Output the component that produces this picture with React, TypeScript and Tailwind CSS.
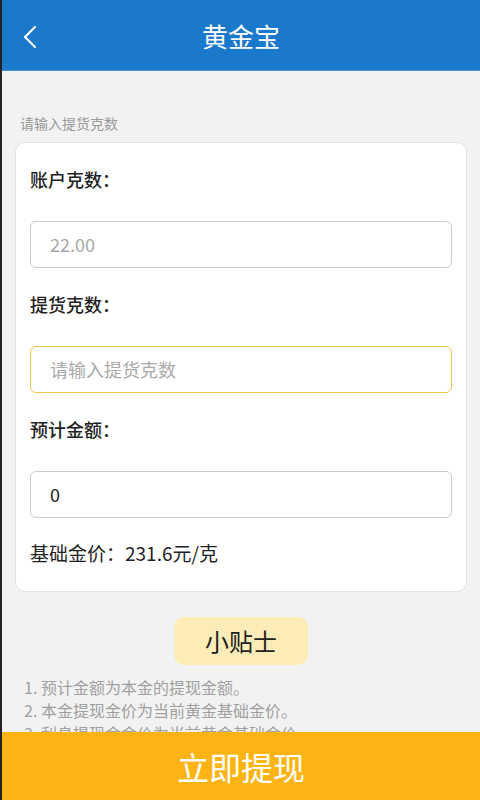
import { ChevronLeft } from "lucide-react";

const font = { fontFamily: '"Noto Sans CJK SC", "Liberation Sans", sans-serif' };

function Field({ label, value, placeholder, focus, dim }: { label: string; value?: string; placeholder?: string; focus?: boolean; dim?: boolean }) {
  return (
    <div>
      <div className="text-[18px] leading-[24px] text-[#222] font-medium pt-[24px]">{label}</div>
      <div
        className={`mt-[30px] h-[47px] rounded-[6px] border flex items-center px-[19px] text-[18px] ${
          focus ? "border-[#f0c850]" : "border-[#cccccc]"
        }`}
      >
        {value !== undefined ? (
          <span className={dim ? "text-[#a8a8a8]" : "text-[#222]"}>{value}</span>
        ) : (
          <span className="text-[#aaaaaa]">{placeholder}</span>
        )}
      </div>
    </div>
  );
}

export default function App() {
  return (
    <div className="relative h-[800px] w-[480px] overflow-hidden bg-[#f2f2f2] border-l-2 border-[#222]" style={font}>
      {/* header */}
      <div className="h-[71px] bg-[#1b79cb] flex items-center justify-center relative border-b border-[#4a95d6]">
        <ChevronLeft className="absolute left-[8px] top-[17px] text-white" size={40} strokeWidth={1.3} />
        <span className="text-white text-[26px]">黄金宝</span>
      </div>

      <div className="px-[13px]">
        <div className="pl-[5px] pt-[42px] text-[14px] leading-[20px] text-[#999]">请输入提货克数</div>

        <div className="mt-[9px] bg-white rounded-[10px] border border-[#e2e2e2] px-[14px] pb-[26px]">
          <Field label="账户克数：" value="22.00" dim />
          <Field label="提货克数：" placeholder="请输入提货克数" focus />
          <Field label="预计金额：" value="0" />
          <div className="pt-[23px] text-[19px] leading-[24px] text-[#222]">基础金价：231.6元/克</div>
        </div>

        <div className="flex justify-center mt-[25px]">
          <div className="w-[134px] h-[48px] rounded-[10px] bg-[#fcedb8] flex items-center justify-center text-[24px] text-[#222]">
            小贴士
          </div>
        </div>

        <div className="pl-[9px] pt-[11px] text-[16px] leading-[23px] text-[#a0a0a0]">
          <div>1. 预计金额为本金的提现金额。</div>
          <div>2. 本金提现金价为当前黄金基础金价。</div>
          <div>3. 利息提现金金价为当前黄金基础金价。</div>
        </div>
      </div>

      {/* bottom action */}
      <div className="absolute left-0 right-0 bottom-0 h-[68px] bg-[#fbb414] flex items-center justify-center">
        <span className="text-white text-[32px]">立即提现</span>
      </div>
    </div>
  );
}
